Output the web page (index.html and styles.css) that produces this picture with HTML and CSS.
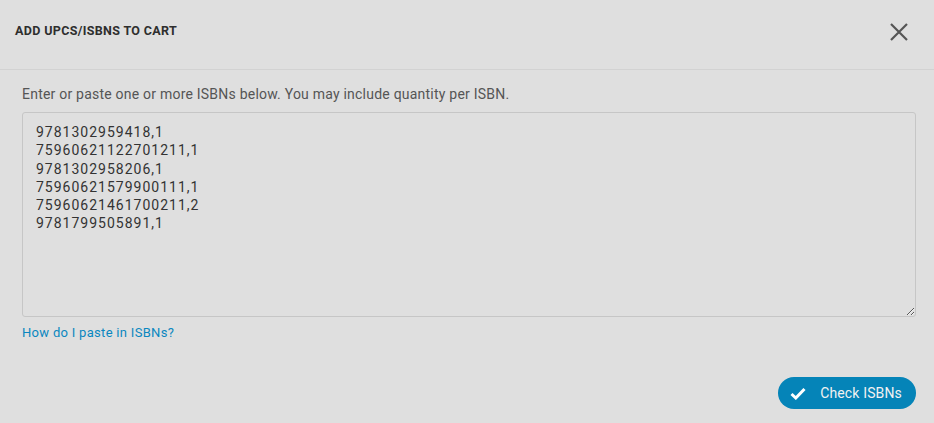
FILE: index.html
```html
<!DOCTYPE html>
<html>
<head>
<meta charset="utf-8" />
<title>Add UPCs/ISBNs to Cart</title>
<link rel="stylesheet" href="styles.css">
</head>
<body>

<div class="modal">
  <div class="modalHeader">
    <h2>ADD UPCS/ISBNS TO CART</h2>
    <button class="closeBtn" type="button" title="Close">
      <svg width="20" height="20" viewBox="0 0 20 20"><path d="M2 2 L18 18 M18 2 L2 18" stroke="#555" stroke-width="2.2" fill="none"/></svg>
    </button>
  </div>
  <div class="modalBody">
    <p class="hint">Enter or paste one or more ISBNs below. You may include quantity per ISBN.</p>
    <textarea id="isbnInput" spellcheck="false">9781302959418,1
75960621122701211,1
9781302958206,1
75960621579900111,1
75960621461700211,2
9781799505891,1</textarea>
    <a class="helpLink" href="#">How do I paste in ISBNs?</a>
  </div>
  <div class="modalFooter">
    <button class="checkBtn" type="button">
      <svg width="16" height="13" viewBox="0 0 16 13"><path d="M1.5 7 L5.8 11 L14.5 2" stroke="#fff" stroke-width="3" fill="none"/></svg>
      Check ISBNs
    </button>
  </div>
</div>

</body>
</html>
```

FILE: styles.css
```css
html, body {
  margin: 0; padding: 0; height: 100%;
  background: #dfdfdf;
  font-family: Roboto, "Liberation Sans", Arial, sans-serif;
  color: #333;
}
.modal {
  display: flex;
  flex-direction: column;
  height: 100%;
}
.modalHeader {
  display: flex;
  align-items: center;
  justify-content: space-between;
  height: 70px;
  padding: 0 15px;
  border-bottom: 1px solid #d2d2d2;
  box-sizing: border-box;
}
.modalHeader h2 {
  margin: 0;
  font-size: 12.5px;
  font-weight: 700;
  color: #2e2e2e;
  letter-spacing: 0.35px;
  margin-top: -8px;
}
.closeBtn {
  background: transparent;
  border: none;
  padding: 0;
  width: 20px;
  height: 20px;
  margin-right: 10px;
  margin-top: -6px;
  cursor: pointer;
}
.modalBody {
  padding: 16px 18px 0 22px;
  display: flex;
  flex-direction: column;
}
.hint {
  margin: 0 0 10px;
  font-size: 14px;
  letter-spacing: 0.22px;
  color: #555;
}
#isbnInput {
  height: 205px;
  box-sizing: border-box;
  background: transparent;
  border: 1px solid #c6c6c6;
  border-radius: 3px;
  padding: 10px 13px;
  font-family: inherit;
  font-size: 14px;
  letter-spacing: 1px;
  line-height: 18.3px;
  color: #333;
  resize: vertical;
  outline: none;
}
.helpLink {
  margin-top: 8px;
  font-size: 13px;
  letter-spacing: 0.3px;
  color: #0a87c0;
  text-decoration: none;
  align-self: flex-start;
}
.modalFooter {
  display: flex;
  justify-content: flex-end;
  padding: 0 18px;
  margin-top: 37px;
}
.checkBtn {
  display: flex;
  align-items: center;
  gap: 14px;
  height: 32px;
  padding: 0 14px 0 12px;
  background: #0584b8;
  color: #f2f2f2;
  border: none;
  border-radius: 16px;
  font-family: inherit;
  font-size: 14px;
  letter-spacing: 0.15px;
  cursor: pointer;
}
```
